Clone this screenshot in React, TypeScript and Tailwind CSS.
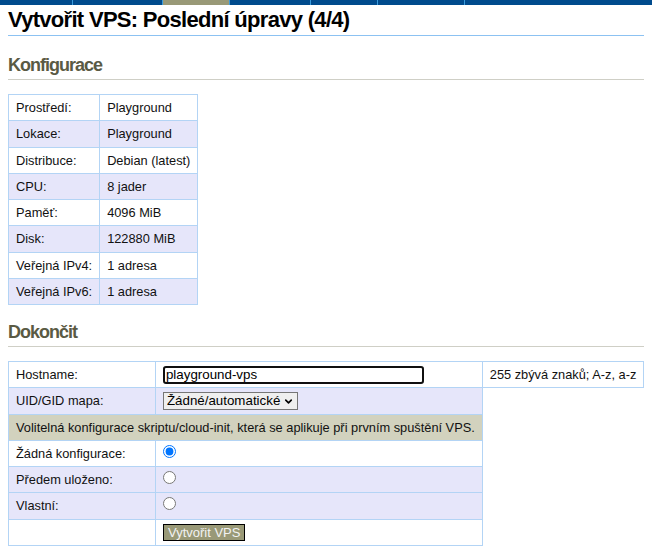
import { ChevronDown } from "lucide-react";

const tabs = [
  { w: "w-[73px]", active: false },
  { w: "w-[90px]", active: false },
  { w: "w-[67px]", active: true },
  { w: "w-[81px]", active: false },
  { w: "w-[67px]", active: false },
  { w: "w-[87px]", active: false },
  { w: "flex-1", active: false },
];

const config = [
  ["Prostředí:", "Playground"],
  ["Lokace:", "Playground"],
  ["Distribuce:", "Debian (latest)"],
  ["CPU:", "8 jader"],
  ["Paměť:", "4096 MiB"],
  ["Disk:", "122880 MiB"],
  ["Veřejná IPv4:", "1 adresa"],
  ["Veřejná IPv6:", "1 adresa"],
];

// base cell, vertical padding added per cell
const base = "border border-[#b3d4f5] px-[7px] leading-[15.25px] align-middle whitespace-nowrap";
const cell = `${base} py-[5px]`;

const App = () => {
  return (
    <div className="min-h-[554px] bg-white font-['Liberation_Sans',Arial,sans-serif] text-[12.8px] text-[#111]">
      {/* top menu strip */}
      <div className="flex h-[5px] bg-[#004b8d]">
        {tabs.map((t, i) => (
          <div
            key={i}
            className={`${t.w} h-full ${t.active ? "bg-[#999977]" : ""} ${
              i < tabs.length - 1 ? "border-r border-[#3a9bdc]" : ""
            }`}
          />
        ))}
      </div>

      <div className="px-2">
        <h1 className="mt-[2px] border-b border-[#8cc2f2] pb-[3px] text-[22px] font-bold leading-[25px] tracking-[-0.7px] text-black">
          Vytvořit VPS: Poslední úpravy (4/4)
        </h1>

        {/* Konfigurace */}
        <h2 className="mt-[19px] border-b border-[#cfcfc6] pb-[3px] text-[18px] font-bold leading-[21px] tracking-[-1px] text-[#5a5a44]">
          Konfigurace
        </h2>
        <table className="mt-[14px] border-collapse">
          <tbody>
            {config.map(([k, v], i) => (
              <tr key={k} className={i % 2 === 1 ? "bg-[#e6e6fa]" : "bg-white"}>
                <td className={cell}>{k}</td>
                <td className={cell}>{v}</td>
              </tr>
            ))}
          </tbody>
        </table>

        {/* Dokončit */}
        <h2 className="mt-[17px] border-b border-[#cfcfc6] pb-[3px] text-[18px] font-bold leading-[21px] tracking-[-1px] text-[#5a5a44]">
          Dokončit
        </h2>
        <table className="mt-[14px] table-fixed border-collapse">
          <tbody>
            <tr className="bg-white">
              <td className={`${cell} w-[147px]`}>Hostname:</td>
              <td className={`${base} w-[327px] py-0`}>
                <input
                  type="text"
                  defaultValue="playground-vps"
                  className="block h-[18px] w-[261px] rounded-[3px] border-2 border-[#101010] px-px text-[13.333px] leading-[14px] text-black outline-none"
                />
              </td>
              <td className={`${cell} w-[161px]`}>255 zbývá znaků; A-z, a-z</td>
            </tr>
            <tr className="bg-[#e6e6fa]">
              <td className={cell}>UID/GID mapa:</td>
              <td className={`${base} py-0`}>
                <div className="relative flex h-[18px] w-[135px] items-center">
                  <select className="h-full w-full appearance-none border border-[#767676] bg-[#efefef] pl-[3px] text-[13.333px] leading-[14px] text-black">
                    <option>Žádné/automatické</option>
                  </select>
                  <ChevronDown
                    className="pointer-events-none absolute right-[4px] top-[4px] h-[11px] w-[11px] text-black"
                    strokeWidth={3.5}
                  />
                </div>
              </td>
            </tr>
            <tr className="bg-[#d2d2be]">
              <td className={cell} colSpan={2}>
                Volitelná konfigurace skriptu/cloud-init, která se aplikuje při prvním spuštění VPS.
              </td>
            </tr>
            {[
              ["Žádná konfigurace:", true, "bg-white"],
              ["Předem uloženo:", false, "bg-[#e6e6fa]"],
              ["Vlastní:", false, "bg-[#e6e6fa]"],
            ].map(([label, checked, bg]) => (
              <tr key={label as string} className={bg as string}>
                <td className={cell}>{label as string}</td>
                <td className={`${base} py-0`}>
                  <input
                    type="radio"
                    name="userdata"
                    defaultChecked={checked as boolean}
                    className="m-0 block h-[13px] w-[13px] -translate-y-[2px]"
                  />
                </td>
              </tr>
            ))}
            <tr className="bg-white">
              <td className={cell}></td>
              <td className={`${base} py-[4px]`}>
                <button className="block border border-black bg-[#999977] px-[4px] text-[13px] leading-[15px] text-[#f2f2f2]">
                  Vytvořit VPS
                </button>
              </td>
            </tr>
          </tbody>
        </table>
      </div>
    </div>
  );
};

export default App;
